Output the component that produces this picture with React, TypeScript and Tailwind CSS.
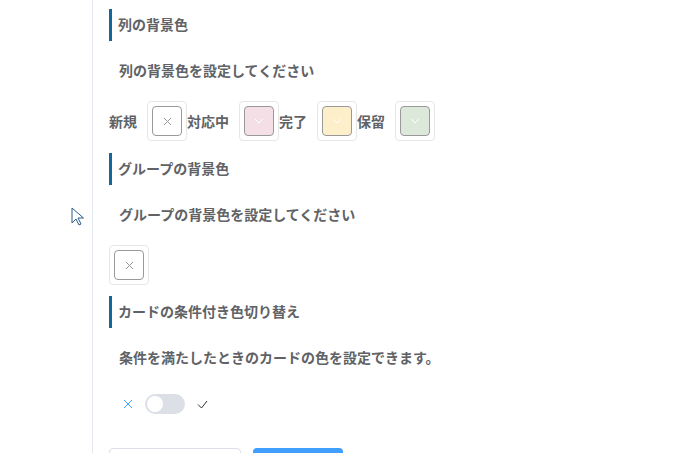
const FONT = { fontFamily: '"Noto Sans CJK JP", "Noto Sans", sans-serif' };

const Swatch = ({ color }: { color?: string }) => (
  <div className="flex h-10 w-10 shrink-0 items-center justify-center rounded border border-[#e6e6e6] bg-white p-1">
    <div
      className="flex h-full w-full items-center justify-center rounded-sm border border-[#999]"
      style={color ? { backgroundColor: color } : undefined}
    >
      {color ? (
        <svg width="10" height="6" viewBox="0 0 10 6" fill="none">
          <path d="M1 1l4 4 4-4" stroke="#fff" strokeWidth="1" />
        </svg>
      ) : (
        <svg width="9" height="9" viewBox="0 0 9 9" fill="none">
          <path d="M1 1l7 7M8 1l-7 7" stroke="#999" strokeWidth="1" />
        </svg>
      )}
    </div>
  </div>
);

const Heading = ({ children }: { children: string }) => (
  <div className="flex h-8 items-center border-l-[3px] border-[#14679b] pb-[2px] pl-[6px] text-[14px] font-bold text-[#606266]">
    {children}
  </div>
);

const Desc = ({ children }: { children: string }) => (
  <div className="flex h-[60px] items-center pb-[2px] pl-[10px] text-[14px] font-bold text-[#606266]">
    {children}
  </div>
);

const columns = [
  { label: "新規" },
  { label: "対応中", color: "#f4dfe6" },
  { label: "完了", color: "#fdefc9" },
  { label: "保留", color: "#dce9da" },
];

export default function App() {
  return (
    <div className="relative flex min-h-[453px] bg-white" style={FONT}>
      <div className="w-[93px] shrink-0 border-r border-[#e4e7ed]" />
      <div className="flex-1 pl-4 pt-[9px]">
        <Heading>列の背景色</Heading>
        <Desc>列の背景色を設定してください</Desc>
        <div className="flex h-10 items-center text-[14px] font-bold text-[#606266]">
          {columns.map((c) => (
            <div className="flex items-center" key={c.label}>
              <span className="mr-[10px]">{c.label}</span>
              <Swatch color={c.color} />
            </div>
          ))}
        </div>

        <div className="mt-3">
          <Heading>グループの背景色</Heading>
        </div>
        <Desc>グループの背景色を設定してください</Desc>
        <Swatch />

        <div className="mt-[11px]">
          <Heading>カードの条件付き色切り替え</Heading>
        </div>
        <Desc>条件を満たしたときのカードの色を設定できます。</Desc>
        <div className="flex h-8 items-center pl-[14px]">
          <svg width="10" height="10" viewBox="0 0 10 10" fill="none">
            <path d="M1 1l8 8M9 1l-8 8" stroke="#409eff" strokeWidth="1" />
          </svg>
          <div className="ml-3 flex h-5 w-10 items-center rounded-full bg-[#dcdfe6] px-[2px]">
            <div className="h-4 w-4 rounded-full bg-white" />
          </div>
          <svg className="ml-3" width="11" height="9" viewBox="0 0 11 9" fill="none">
            <path d="M1 4.5l3.5 3.5L10 1" stroke="#303133" strokeWidth="1" />
          </svg>
        </div>

        <div className="mt-7 flex gap-3">
          <button className="h-10 w-[132px] rounded border border-[#dcdfe6] bg-white" />
          <button className="h-10 w-[90px] rounded bg-[#409eff]" />
        </div>
      </div>

      <svg className="absolute left-[71px] top-[207px]" width="14" height="20" viewBox="0 0 14 20" fill="none">
        <path d="M1 1v15l4-4 3 6 2-1-3-6h5.5z" fill="#fff" stroke="#2a5d8c" strokeWidth="1" strokeLinejoin="round" />
      </svg>
    </div>
  );
}
